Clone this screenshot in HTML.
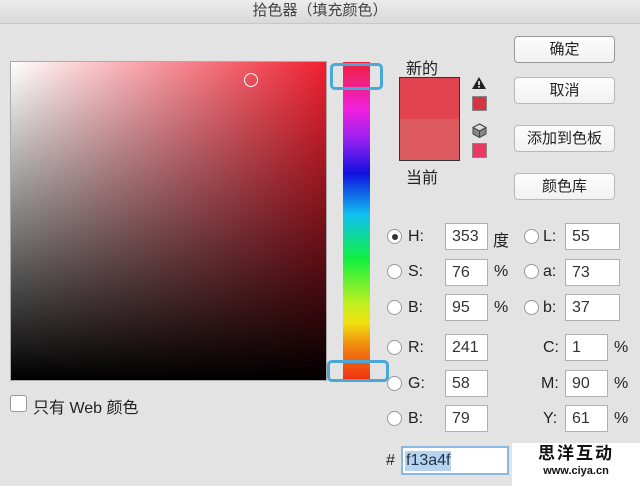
<!DOCTYPE html>
<html><head><meta charset="utf-8"><style>
*{margin:0;padding:0;box-sizing:border-box}
body{width:640px;height:486px;overflow:hidden;background:#e3e3e3;font-family:"Liberation Sans","Noto Sans CJK SC",sans-serif;color:#222;position:relative}
.a{position:absolute}
.title{left:0;top:0;width:640px;height:24px;background:linear-gradient(#ececec,#d9d9d9);border-bottom:1px solid #c8c8c8;text-align:center;font-size:15px;line-height:22px;color:#444}
.field{left:10px;top:61px;width:317px;height:320px;background:linear-gradient(to bottom,rgba(0,0,0,0),#000),linear-gradient(to right,#fff,#f02030);border:1px solid #aaa}
.hue{left:343px;top:62px;width:27px;height:318px;background:linear-gradient(#f0203a 0%,#f020e0 15%,#9020f0 25%,#1010e0 35%,#10c0f0 48%,#10f040 62%,#c0f020 76%,#f0e010 82%,#f08010 90%,#f03010 100%)}
.hl{border:3px solid #4aa8d8;border-radius:5px}
.btn{left:514px;width:101px;height:27px;background:linear-gradient(#fdfdfd,#f1f1f1);border:1px solid #b8b8b8;border-radius:4px;text-align:center;font-size:15px;line-height:25px}
.lab{font-size:16px}
.in{width:43px;height:27px;background:#fff;border:1px solid #b0b0b0;font-size:16px;line-height:25px;padding-left:6px;color:#333}
.rd{width:15px;height:15px;border-radius:50%;background:#fff;border:1px solid #999}
</style></head><body>
<div class="a title">拾色器（填充颜色）</div>
<div class="a field"></div>
<div class="a" style="left:244px;top:73px;width:14px;height:14px;border:1.5px solid #fff;border-radius:50%"></div>
<div class="a hue"></div>
<div class="a hl" style="left:330px;top:63px;width:53px;height:27px"></div>
<div class="a hl" style="left:327px;top:360px;width:62px;height:22px"></div>
<div class="a lab" style="left:406px;top:55px">新的</div>
<div class="a" style="left:399px;top:77px;width:61px;height:84px;border:1px solid #333;background:linear-gradient(#e24350 50%,#dd5b60 50%)"></div>
<div class="a lab" style="left:406px;top:164px">当前</div>
<svg class="a" style="left:471px;top:76px" width="16" height="14"><path d="M8 1L15 13H1Z" fill="#222"/><rect x="7.2" y="5" width="1.6" height="4" fill="#fff"/><rect x="7.2" y="10" width="1.6" height="1.6" fill="#fff"/></svg>
<div class="a" style="left:472px;top:96px;width:15px;height:15px;border:1px solid #888;background:#d8343f"></div>
<svg class="a" style="left:472px;top:123px" width="15" height="15"><path d="M7.5 1L14 4.5V11L7.5 14.5L1 11V4.5Z" fill="#888" stroke="#444"/><path d="M1 4.5L7.5 8L14 4.5M7.5 8V14.5" stroke="#444" fill="none"/><path d="M7.5 1L14 4.5L7.5 8L1 4.5Z" fill="#ddd" stroke="#444"/></svg>
<div class="a" style="left:472px;top:143px;width:15px;height:15px;border:1px solid #888;background:#e83a62"></div>
<div class="a btn" style="top:36px;border-color:#999">确定</div>
<div class="a btn" style="top:77px">取消</div>
<div class="a btn" style="top:125px">添加到色板</div>
<div class="a btn" style="top:173px">颜色库</div>

<div class="a rd" style="left:387px;top:229px"></div><div class="a" style="left:392px;top:234px;width:6px;height:6px;border-radius:50%;background:#333"></div>
<div class="a lab" style="left:408px;top:228px">H:</div><div class="a in" style="left:445px;top:223px">353</div><div class="a lab" style="left:493px;top:227px">度</div>
<div class="a rd" style="left:524px;top:229px"></div><div class="a lab" style="left:543px;top:228px">L:</div><div class="a in" style="left:565px;top:223px;width:55px">55</div>

<div class="a rd" style="left:387px;top:264px"></div><div class="a lab" style="left:408px;top:263px">S:</div><div class="a in" style="left:445px;top:259px">76</div><div class="a lab" style="left:494px;top:263px">%</div>
<div class="a rd" style="left:524px;top:264px"></div><div class="a lab" style="left:543px;top:263px">a:</div><div class="a in" style="left:565px;top:259px;width:55px">73</div>

<div class="a rd" style="left:387px;top:300px"></div><div class="a lab" style="left:408px;top:299px">B:</div><div class="a in" style="left:445px;top:294px">95</div><div class="a lab" style="left:494px;top:299px">%</div>
<div class="a rd" style="left:524px;top:300px"></div><div class="a lab" style="left:543px;top:299px">b:</div><div class="a in" style="left:565px;top:294px;width:55px">37</div>

<div class="a rd" style="left:387px;top:340px"></div><div class="a lab" style="left:408px;top:339px">R:</div><div class="a in" style="left:445px;top:334px">241</div>
<div class="a lab" style="left:543px;top:339px">C:</div><div class="a in" style="left:565px;top:334px">1</div><div class="a lab" style="left:614px;top:339px">%</div>

<div class="a rd" style="left:387px;top:376px"></div><div class="a lab" style="left:408px;top:375px">G:</div><div class="a in" style="left:445px;top:370px">58</div>
<div class="a lab" style="left:541px;top:375px">M:</div><div class="a in" style="left:565px;top:370px">90</div><div class="a lab" style="left:614px;top:375px">%</div>

<div class="a rd" style="left:387px;top:411px"></div><div class="a lab" style="left:408px;top:410px">B:</div><div class="a in" style="left:445px;top:405px">79</div>
<div class="a lab" style="left:543px;top:410px">Y:</div><div class="a in" style="left:565px;top:405px">61</div><div class="a lab" style="left:614px;top:410px">%</div>

<div class="a lab" style="left:386px;top:452px">#</div>
<div class="a" style="left:401px;top:446px;width:108px;height:29px;background:#fff;border:2px solid #8ab8e0"></div>
<div class="a" style="left:405px;top:451px;background:#b6d4f2;font-size:16px;line-height:20px;padding:0 1px;color:#234">f13a4f</div>
<div class="a" style="left:512px;top:443px;width:128px;height:43px;background:#fff;text-align:center">
<div style="font-size:17px;font-weight:bold;line-height:22px;letter-spacing:2px;color:#111">思洋互动</div>
<div style="font-size:11px;font-weight:bold;line-height:12px;color:#111">www.ciya.cn</div></div>

<div class="a" style="left:10px;top:395px;width:17px;height:17px;background:#fff;border:1px solid #999;border-radius:3px"></div>
<div class="a lab" style="left:33px;top:394px">只有 Web 颜色</div>
</body></html>
